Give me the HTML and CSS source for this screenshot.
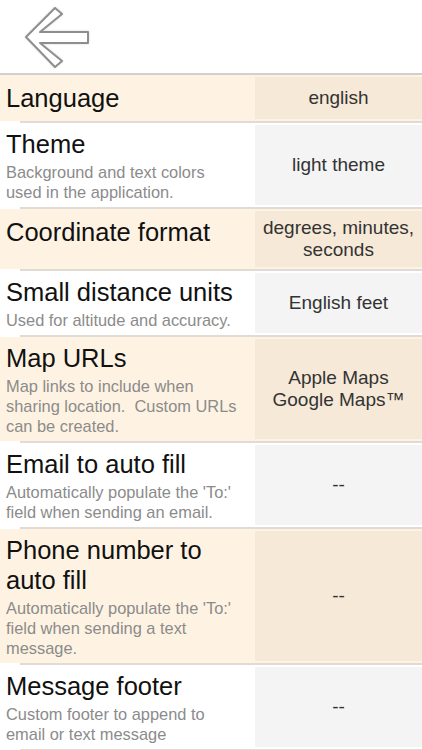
FILE: index.html
```html
<!DOCTYPE html>
<html lang="en">
<head>
    <meta charset="UTF-8">
    <meta name="viewport" content="width=device-width, initial-scale=1.0">
    <title>Settings</title>
    <link rel="stylesheet" href="styles.css">
</head>
<body>
    <header class="topbar">
        <!-- Back button -->
        <svg class="back" width="66" height="64" viewBox="0 0 66 64">
            <polygon points="2,31 31,2 38,8 16,26 64,26 64,37 16,37 38,55 31,61"
                     fill="#fff" stroke="#8e8e8e" stroke-width="2" stroke-linejoin="round"/>
        </svg>
    </header>

    <ul class="settings">
        <li class="item cream">
            <div class="row">
                <div class="label single">
                    <div class="title">Language</div>
                </div>
                <div class="value">english</div>
            </div>
        </li>
        <li class="item">
            <div class="row">
                <div class="label">
                    <div class="title">Theme</div>
                    <div class="desc">Background and text colors used in the application.</div>
                </div>
                <div class="value">light theme</div>
            </div>
        </li>
        <li class="item cream">
            <div class="row">
                <div class="label single">
                    <div class="title">Coordinate format</div>
                </div>
                <div class="value">degrees, minutes, seconds</div>
            </div>
        </li>
        <li class="item">
            <div class="row">
                <div class="label">
                    <div class="title">Small distance units</div>
                    <div class="desc">Used for altitude and accuracy.</div>
                </div>
                <div class="value">English feet</div>
            </div>
        </li>
        <li class="item cream">
            <div class="row">
                <div class="label">
                    <div class="title">Map URLs</div>
                    <div class="desc">Map links to include when sharing location.&nbsp; Custom URLs can be created.</div>
                </div>
                <div class="value">Apple Maps<br>Google Maps™</div>
            </div>
        </li>
        <li class="item">
            <div class="row">
                <div class="label">
                    <div class="title">Email to auto fill</div>
                    <div class="desc">Automatically populate the 'To:' field when sending an email.</div>
                </div>
                <div class="value">--</div>
            </div>
        </li>
        <li class="item cream">
            <div class="row">
                <div class="label">
                    <div class="title">Phone number to auto fill</div>
                    <div class="desc">Automatically populate the 'To:' field when sending a text message.</div>
                </div>
                <div class="value">--</div>
            </div>
        </li>
        <li class="item">
            <div class="row">
                <div class="label">
                    <div class="title">Message footer</div>
                    <div class="desc">Custom footer to append to email or text message</div>
                </div>
                <div class="value">--</div>
            </div>
        </li>
    </ul>
</body>
</html>
```

FILE: styles.css
```css
body {
    font-family: 'Liberation Sans', Arial, sans-serif;
    background-color: #fff;
    margin: 0;
    padding: 0;
}

.topbar {
    box-sizing: border-box;
    height: 75px;
    border-bottom: 2px solid #d2d0cc;
    padding: 6px 0 0 24px;
}

.back {
    display: block;
    filter: drop-shadow(0 0 1px rgba(0, 0, 0, 0.15));
}

.settings {
    list-style: none;
    margin: 0;
    padding: 0;
}

/* inset separator under each row */
.item::after {
    content: '';
    display: block;
    height: 2px;
    margin-left: 20px;
    background-color: #e0dcd5;
}

.row {
    display: flex;
    background-color: #fff;
}

.cream .row {
    background-color: #fef3e2;
}

.label {
    flex: 1;
    padding: 6px 14px 5px 6px;
}

.label.single {
    padding-top: 8px;
    padding-bottom: 8px;
}

.title {
    font-size: 25.5px;
    line-height: 30px;
    color: #111;
}

.desc {
    margin-top: 3px;
    font-size: 16.4px;
    line-height: 20px;
    color: #8b8b8b;
}

.value {
    width: 167px;
    flex-shrink: 0;
    margin: 2px 0;
    display: flex;
    align-items: center;
    justify-content: center;
    text-align: center;
    font-size: 19px;
    line-height: 22px;
    color: #333;
    background-color: #f4f4f4;
    padding: 6px 4px;
    box-sizing: border-box;
}

.cream .value {
    background-color: #f6e9d8;
}
```
